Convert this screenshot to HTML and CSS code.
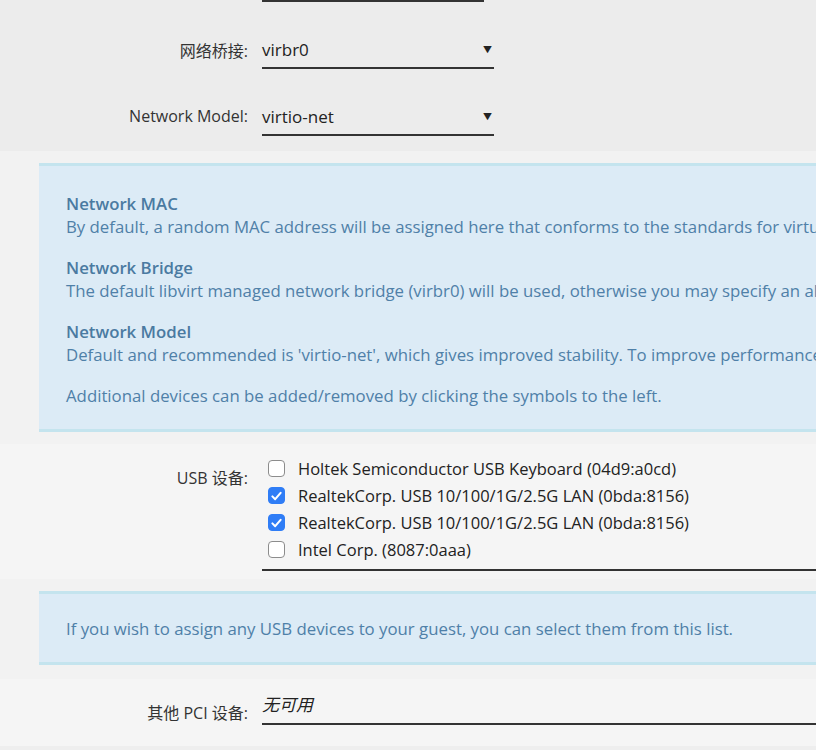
FILE: index.html
```html
<!DOCTYPE html>
<html lang="zh">
  <head>
    <meta charset="UTF-8" />
    <meta name="viewport" content="width=device-width, initial-scale=1.0" />
    <title>VM Settings</title>
    <link rel="stylesheet" href="styles.css">
  </head>
  <body>
    <div class="page">
      <!-- network section (page is scrolled, the MAC row sits above the fold) -->
      <div class="band band-a">
        <div class="row">
          <label class="label"></label>
          <div class="field"></div>
        </div>
        <div class="row">
          <label class="label">网络桥接:</label>
          <div class="field select"><span class="value">virbr0</span><span class="arrow">▼</span></div>
        </div>
        <div class="row">
          <label class="label">Network Model:</label>
          <div class="field select"><span class="value">virtio-net</span><span class="arrow">▼</span></div>
        </div>
      </div>

      <div class="band band-b">
        <div class="info">
          <p><b>Network MAC</b><br>By default, a random MAC address will be assigned here that conforms to the standards for virtual network interface controllers.</p>
          <p><b>Network Bridge</b><br>The default libvirt managed network bridge (virbr0) will be used, otherwise you may specify an alternative name.</p>
          <p><b>Network Model</b><br>Default and recommended is 'virtio-net', which gives improved stability. To improve performance 'virtio' can be selected.</p>
          <p>Additional devices can be added/removed by clicking the symbols to the left.</p>
        </div>
      </div>

      <!-- usb section -->
      <div class="band band-c">
        <div class="row usb-row">
          <label class="label">USB 设备:</label>
          <div class="field list">
            <div class="check"><span class="box"></span>Holtek Semiconductor USB Keyboard (04d9:a0cd)</div>
            <div class="check"><span class="box on"><svg viewBox="0 0 16 16" width="16" height="16"><path d="M3.6 8.4 6.6 11.4 12.4 4.6" fill="none" stroke="#fff" stroke-width="2.2" stroke-linecap="round" stroke-linejoin="round"/></svg></span>RealtekCorp. USB 10/100/1G/2.5G LAN (0bda:8156)</div>
            <div class="check"><span class="box on"><svg viewBox="0 0 16 16" width="16" height="16"><path d="M3.6 8.4 6.6 11.4 12.4 4.6" fill="none" stroke="#fff" stroke-width="2.2" stroke-linecap="round" stroke-linejoin="round"/></svg></span>RealtekCorp. USB 10/100/1G/2.5G LAN (0bda:8156)</div>
            <div class="check"><span class="box"></span>Intel Corp. (8087:0aaa)</div>
          </div>
        </div>
      </div>

      <div class="band band-b band-short">
        <div class="info short">
          <p>If you wish to assign any USB devices to your guest, you can select them from this list.</p>
        </div>
      </div>

      <!-- pci section -->
      <div class="band band-c">
        <div class="row pci-row">
          <label class="label">其他 PCI 设备:</label>
          <div class="field wide"><i class="value">无可用</i></div>
        </div>
      </div>
      <div class="band band-d"></div>
    </div>
  </body>
</html>
```

FILE: styles.css
```css
html, body {
  overflow: hidden;
}
body {
  margin: 0;
  font-family: "Open Sans", "Noto Sans CJK SC", sans-serif;
  font-size: 16px;
  color: #333;
  background: #efefef;
}
.page {
  width: 1300px;
  margin-top: -50px;
}
.band-a {
  background: #ececec;
}
.band-b {
  background: #f2f2f2;
  padding: 12px 0 12px 39px;
}
.band-short {
  padding-bottom: 14px;
}
.band-c {
  background: #f5f5f5;
}
.band-d {
  height: 40px;
  background: #eeeeee;
}
.row {
  display: flex;
  align-items: flex-start;
  height: 67px;
}
.label {
  width: 248px;
  flex: none;
  text-align: right;
  padding-top: 21px;
  margin-right: 14px;
  color: #333;
}
.field {
  display: flex;
  align-items: center;
  box-sizing: border-box;
  width: 222px;
  height: 34px;
  margin-top: 18px;
  padding-bottom: 3px;
  border-bottom: 2px solid #333;
  color: #222;
  font-size: 17px;
}
.field.select {
  width: 232px;
  justify-content: space-between;
}
.arrow {
  font-size: 9px;
  margin-right: 2px;
  color: #222;
}
.info {
  background: #dcebf6;
  border-top: 3px solid #c4e4ee;
  border-bottom: 3px solid #c4e4ee;
  padding: 26px 27px 22px;
  color: #4f80a8;
  font-size: 16.8px;
  line-height: 23px;
}
.info p {
  margin: 0 0 18px;
  white-space: nowrap;
}
.info p:last-child {
  margin-bottom: 0;
}
.info b {
  color: #4a7aa1;
  font-weight: 600;
}
.info.short {
  padding: 23px 27px 22px;
}
.usb-row {
  height: 135px;
}
.usb-row .label {
  padding-top: 21px;
}
.field.list {
  display: block;
  width: auto;
  flex: 1;
  height: auto;
  margin-top: 11px;
  padding: 0 0 6px 6px;
  font-size: 16.5px;
}
.check {
  display: flex;
  align-items: center;
  height: 27px;
}
.box {
  box-sizing: border-box;
  width: 17px;
  height: 17px;
  margin-right: 13px;
  border: 1px solid #8c8c8c;
  border-radius: 4px;
  background: #fff;
  display: flex;
  align-items: center;
  justify-content: center;
}
.box.on {
  background: #2f7df6;
  border-color: #2f7df6;
}
.pci-row .label {
  padding-top: 21px;
}
.field.wide {
  flex: 1;
  width: auto;
  height: 46px;
  margin-top: 0;
  padding: 0 0 7px;
  align-items: flex-end;
}
.field.wide .value {
  font-style: italic;
}
```
